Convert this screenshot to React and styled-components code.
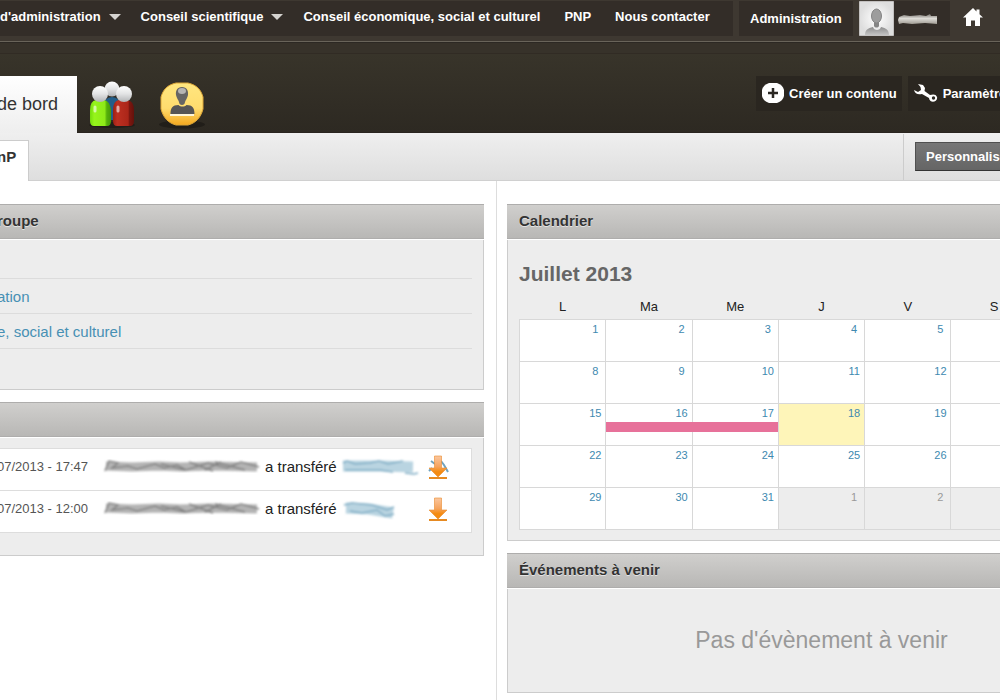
import React from "react";
import styled, { createGlobalStyle, css } from "styled-components";

const Global = createGlobalStyle`
  * { box-sizing: border-box; }
  body {
    margin: 0;
    background: #fff;
    font-family: "Liberation Sans", Arial, sans-serif;
    font-size: 15px;
    color: #222;
  }
  a { text-decoration: none; color: inherit; }
  ul { list-style: none; margin: 0; padding: 0; }
  button { font: inherit; border: 0; cursor: pointer; }
`;

const Viewport = styled.div`
  min-height: 100vh;
  overflow: hidden;
  display: flex;
`;

/* The portal is wider than the window on both sides. */
const Page = styled.div`
  flex: 1;
  margin: 0 -148px 0 -3px;
  display: flex;
  flex-direction: column;
`;

const TopBar = styled.header`
  display: flex;
  gap: 6px;
  height: 42px;
  padding-top: 1px;
  background: #3e3831;
  border-bottom: 1px solid #69645a;
`;

const Nav = styled.nav`
  display: flex;
  gap: 24px;
  width: 736px;
  height: 35px;
  padding: 0 0 3px 3px;
  align-items: center;
  background: #332d28;
`;

const NavLink = styled.a`
  display: flex;
  align-items: center;
  gap: 8px;
  color: #fff;
  font-weight: bold;
  font-size: 13px;
  line-height: 16px;
  white-space: nowrap;
`;

const Caret = styled.i`
  margin-right: -4px;
  border: 6px solid transparent;
  border-top-color: #d5d3d0;
  border-bottom: 0;
`;

const TopBox = styled.a`
  display: flex;
  align-items: center;
  height: 35px;
  padding: 0 11px;
  background: #332d28;
  color: #fff;
  font-weight: bold;
  font-size: 13px;
`;

const UserBox = styled(TopBox)`
  padding: 0 11px 0 0;
  gap: 4px;
`;

const HomeLink = styled.a`
  display: flex;
  align-items: center;
  height: 32px;
  padding-left: 7px;
`;

const Banner = styled.div`
  display: flex;
  align-items: flex-end;
  height: 91px;
  border-top: 1px solid #2c2823;
  border-bottom: 1px solid #29241f;
  background: linear-gradient(#37322a 0 10px, #312b24 10px 11px, #38342a 11px, #2d2922);
`;

const Tab = styled.a`
  width: 80px;
  height: 57px;
  margin-bottom: -1px;
  line-height: 57px;
  font-size: 18px;
  color: #333;
  background: linear-gradient(#fff, #eee);
`;

const IconLink = styled.a`
  display: flex;
  width: 70px;
  height: 56px;
  justify-content: center;
`;

const Actions = styled.div`
  display: flex;
  gap: 6px;
  width: 392px;
  height: 56px;
  margin-left: auto;
`;

const ActionButton = styled.button`
  display: flex;
  align-items: center;
  gap: 5px;
  height: 35px;
  padding: 0 5px 1px 6px;
  background: #2a2620;
  color: #fff;
  font-size: 13px;
  font-weight: bold;
  white-space: nowrap;
`;

const SubBar = styled.div`
  display: flex;
  justify-content: space-between;
  align-items: flex-end;
  height: 48px;
  background: linear-gradient(#efefef, #dedede);
  border-bottom: 1px solid #d0d0d0;
`;

const SubTab = styled.a`
  width: 32px;
  height: 41px;
  margin-bottom: -1px;
  border: solid #ccc;
  border-width: 1px 1px 0 0;
  background: #fff;
  font-weight: bold;
  line-height: 32px;
  color: #333;
`;

const Customize = styled.div`
  width: 245px;
  height: 46px;
  padding: 8px 11px;
  border-left: 1px solid #ccc;
`;

const GreyButton = styled.button`
  height: 29px;
  padding: 0 10px;
  border: 1px solid #505050;
  border-bottom-color: #333;
  background: linear-gradient(#777, #656565);
  color: #fff;
  font-size: 13px;
  font-weight: bold;
`;

const Columns = styled.main`
  flex: 1;
  display: grid;
  grid-template-columns: 500fr 651fr;
`;

const Column = styled.div`
  display: flex;
  flex-direction: column;
  gap: 12px;
  padding: 23px 12px 8px 0;
  ${(p) =>
    p.$right
      ? css`padding-left: 10px;`
      : css`border-right: 1px solid #ddd;`}
`;

const Panel = styled.section`
  background: #ededed;
  border: solid #ccc;
  border-width: 0 1px 1px;
`;

const PanelTitle = styled.h2`
  height: 35px;
  margin: 0 -1px;
  padding-left: ${(p) => (p.$inset ? "12px" : "0")};
  border: 1px solid #aeadac;
  border-width: 1px 0;
  background: linear-gradient(#d0cfcd, #b8b7b5);
  box-shadow: 0 1px #fff;
  font-size: 15px;
  line-height: 32px;
  color: #333;
  text-shadow: 0 1px #e4e4e4;
`;

const LinkList = styled.ul`
  margin-left: -1px;
  padding: 4px 11px 40px 0;
`;

const LinkItem = styled.li`
  height: 35px;
  line-height: 35px;
  border-bottom: 1px solid #dcdcdc;
  color: #4790b4;
  &:first-child { height: 36px; }
`;

const Transfers = styled.ul`
  margin: 11px 11px 22px -1px;
  border: 1px solid #ddd;
  border-left: 0;
  background: #fff;
`;

const Transfer = styled.li`
  display: flex;
  gap: 4px;
  height: 41px;
  padding-top: 5px;
  line-height: 26px;
  & + & { height: 42px; border-top: 1px solid #ddd; }
`;

const When = styled.time`
  width: 100px;
  font-size: 13px;
  line-height: 25px;
  color: #555;
  white-space: nowrap;
`;

const Download = styled.a`
  display: flex;
`;

const Month = styled.h3`
  margin: 0;
  padding: 22px 11px 0;
  font-size: 21px;
  line-height: 26px;
  color: #666;
`;

const CalendarWrap = styled.div`
  padding: 6px 11px 10px;
`;

const Calendar = styled.table`
  width: 100%;
  table-layout: fixed;
  border-collapse: collapse;
  th {
    height: 26px;
    padding: 1px 0 0;
    font-size: 13px;
    font-weight: normal;
  }
`;

const Day = styled.td`
  position: relative;
  height: 42px;
  padding: 3px 0 0;
  vertical-align: top;
  border: 1px solid #d8d8d8;
  background: ${(p) => (p.$today ? "#fef5b9" : p.$out ? "#ededed" : "#fff")};
`;

const DayLink = styled.a`
  display: block;
  width: 20px;
  margin-left: auto;
  text-align: center;
  font-size: 11px;
  line-height: 13px;
  color: ${(p) => (p.$out ? "#999" : "#4089b0")};
`;

const EventBar = styled.div`
  position: absolute;
  z-index: 1;
  top: 18px;
  left: 0;
  width: calc(200% + 1px);
  height: 10px;
  background: #e7719a;
`;

const Empty = styled.p`
  margin: 0;
  padding: 37px 0;
  text-align: center;
  font-size: 23px;
  line-height: 30px;
  color: #999;
`;

const weekdays = ["L", "Ma", "Me", "J", "V", "S", "D"];
const weeks = [0, 1, 2, 3, 4].map((w) =>
  weekdays.map((_, d) => {
    const n = w * 7 + d + 1;
    return { n: n > 31 ? n - 31 : n, out: n > 31, today: n === 18, event: n === 16 };
  })
);

const Portrait = () => (
  <svg width="35" height="35" viewBox="0 0 35 35">
    <defs>
      <radialGradient id="pbg"><stop offset="0" stopColor="#fff" /><stop offset="1" stopColor="#dedede" /></radialGradient>
      <linearGradient id="pfg" x2="0" y2="1"><stop stopColor="#8d8d8d" /><stop offset="1" stopColor="#c4c4c4" /></linearGradient>
    </defs>
    <path fill="url(#pbg)" stroke="#c3c1c0" d="M.5.5h34v34H.5z" />
    <path fill="url(#pfg)" d="M6 34c0-5 3-7 8-8 1 4 7 4 8 0 5 1 8 3 8 8z" />
    <path fill="#858585" d="M15 20h5v5c-1 2-4 2-5 0z" />
    <ellipse cx="17.500" cy="15" rx="5" ry="7" fill="#9d9d9d" stroke="#858585" />
  </svg>
);

const HiddenName = () => (
  <svg width="41" height="14" viewBox="0 0 41 14">
    <defs>
      <linearGradient id="hn" x2="0" y2="1"><stop stopColor="#77736e" /><stop offset=".45" stopColor="#dddbd6" /><stop offset="1" stopColor="#a19d95" /></linearGradient>
      <filter id="hb"><feGaussianBlur stdDeviation=".6" /></filter>
    </defs>
    <path filter="url(#hb)" fill="url(#hn)" d="M1 5 6 3l6 1 10-1 6 1 4-2 1 2h6v8l-12-1-13 1-9-1-4 1-1-4z" />
  </svg>
);

const HomeIcon = () => (
  <svg width="20" height="18" viewBox="0 0 20 18" fill="#fff">
    <path d="M10 0 0 9.500h3V18h5v-5.500h4V18h5V9.500h3l-3.500-3.300V1.500h-3v1.900z" />
  </svg>
);

const GroupIcon = () => (
  <svg width="48" height="56" viewBox="0 0 48 56">
    <defs>
      <linearGradient id="gh" x2="0" y2="1"><stop stopColor="#fff" /><stop offset=".5" stopColor="#e2e3e4" /><stop offset="1" stopColor="#b2b4b6" /></linearGradient>
      <linearGradient id="gg"><stop stopColor="#74dc0d" /><stop offset=".2" stopColor="#96f51b" /><stop offset=".7" stopColor="#8eea18" /><stop offset=".8" stopColor="#55b00a" /><stop offset="1" stopColor="#479b08" /></linearGradient>
      <linearGradient id="gr"><stop stopColor="#9c2014" /><stop offset=".2" stopColor="#bd3021" /><stop offset=".72" stopColor="#ab2619" /><stop offset=".78" stopColor="#7d1710" /><stop offset="1" stopColor="#64110b" /></linearGradient>
    </defs>
    <ellipse cx="24" cy="49" rx="23" ry="3" fill="#211e1a" />
    <path fill="#235e89" d="M17 24q7-6 14 0v20H17z" />
    <circle cx="24" cy="13" r="7.500" fill="url(#gh)" />
    <path fill="url(#gg)" d="M2 34q0-9 6-10h8q6 1 7 10v11q0 5-4 5H6q-4 0-4-5z" />
    <path fill="url(#gr)" d="M25 34q0-9 6-10h8q7 1 7 10v11q0 5-4 5H29q-4 0-4-5z" />
    <circle cx="12" cy="18" r="8" fill="url(#gh)" />
    <circle cx="36" cy="18" r="8" fill="url(#gh)" />
    <path stroke="#fff" strokeOpacity=".6" strokeWidth="3" strokeLinecap="round" d="M7 31v4m23-4v4" />
  </svg>
);

const MemberIcon = () => (
  <svg width="48" height="56" viewBox="0 0 48 56">
    <defs><linearGradient id="mb" x2="0" y2="1"><stop stopColor="#ffe780" /><stop offset=".6" stopColor="#ffdc6e" /><stop offset="1" stopColor="#f4a81f" /></linearGradient></defs>
    <ellipse cx="24" cy="48.500" rx="23" ry="4" fill="#211e19" />
    <path fill="url(#mb)" stroke="#dda738" d="M18 7h12C39 9 43 14 45 21v12C43 41 38 47 30 49H18C10 47 5 41 3 33V21C5 14 9 9 18 7z" />
    <path stroke="#fff6d8" strokeWidth="2" d="M12 39h24" />
    <path fill="#575655" d="M12.500 38c0-6 2-9 8-9 2 2 6 2 8 0 6 0 8 3 8 9z" />
    <path fill="#666564" d="M24 11c-5 0-6.500 4-6 8 .5 3 2.500 5 3 7 0 4 6 4 6 0 .5-2 2.500-4 3-7 .5-4-1-8-6-8z" />
    <ellipse cx="24" cy="15" rx="4" ry="3" fill="#b6b5b3" />
  </svg>
);

const PlusIcon = () => (
  <svg width="22" height="20" viewBox="0 0 22 20">
    <path fill="#fff" d="M7 0h8q6 2 7 7v6q-1 5-7 7H7q-6-2-7-7V7q1-5 7-7z" />
    <path stroke="#292722" strokeWidth="2.500" d="M11 5v10M6 10h10" />
  </svg>
);

const WrenchIcon = () => (
  <svg width="24" height="18" viewBox="0 0 24 18">
    <path fill="#fff" d="m4 0 5 1 2 3-.5 3L16 11c3-1 6-1 7 2 1 4-4 6-6.500 4-1-1-1.500-2-1.500-3L8 10c-4 1-7 0-8-4l4 2 3-2-.5-3z" />
    <circle cx="19.500" cy="14" r="1.700" fill="#292722" />
  </svg>
);

const NameSmudge = () => (
  <svg width="160" height="26" viewBox="0 0 160 26">
    <filter id="ns" x="-5%" y="-20%" width="110%" height="140%"><feGaussianBlur stdDeviation="1.300" /></filter>
    <g filter="url(#ns)" fill="none">
      <path stroke="#b4b4b4" strokeWidth="9" d="m5 12 26 1 27-1 22 1 30-1 46 1" />
      <path stroke="#808080" strokeWidth="1.500" d="m4 17 4-10 9 2-6 5 16-2 9 3 18-5 9 4 13-3 9 5 22-7 19 5 14-6 18 5M60 10l24 6M88 8l24 9m2-9 30 8m-24-8-16 8" />
    </g>
  </svg>
);

const FileSmudge = ({ short }) => (
  <svg width="82" height="26" viewBox="0 0 82 26">
    <filter id="fs" x="-10%" y="-30%" width="120%" height="160%"><feGaussianBlur stdDeviation="1.200" /></filter>
    <g filter="url(#fs)" fill="none">
      <path stroke="#b9d4e1" strokeWidth="11" d={short ? "m5 12 23 1 24 4" : "M2 12h39l31 1"} />
      <path stroke="#7fadc5" strokeWidth="1.500" d={short ? "m3 9 8-2 20 2 15 5 7-3M9 15l12 2 15-3 8 6 9-2" : "m2 9 4-2 8 3 15-1 9-2 9 3 15-3m2 12 9 1 4-1M4 16h35l13 2"} />
    </g>
  </svg>
);

const DownloadIcon = ({ smudged }) => (
  <svg width="24" height="30" viewBox="0 0 24 30">
    <defs><linearGradient id="da" x2="0" y2="1"><stop stopColor="#fbc79f" /><stop offset=".5" stopColor="#f6a45e" /><stop offset=".75" stopColor="#f48b12" /></linearGradient></defs>
    {smudged && <path stroke="#6fa3bf" strokeWidth="2" d="m4 7 4 3m-6 7 3-3m9-7 3 4 4 7" fill="none" />}
    <path fill="url(#da)" stroke="#e98a2c" strokeWidth=".6" d="M7.500 2h7v12H20l-9 9-9-9h5.500z" />
    <path stroke="#e68a22" strokeWidth="2" d="M2 24h18" />
  </svg>
);

export default function App() {
  return (
    <Viewport>
      <Global />
      <Page>
        <TopBar>
          <Nav>
            <NavLink href="#ca">d'administration <Caret /></NavLink>
            <NavLink href="#cs">Conseil scientifique <Caret /></NavLink>
            <NavLink href="#cesc">Conseil économique, social et culturel</NavLink>
            <NavLink href="#pnp">PNP</NavLink>
            <NavLink href="#contact">Nous contacter</NavLink>
          </Nav>
          <TopBox href="#admin">Administration</TopBox>
          <UserBox href="#profil"><Portrait /><HiddenName /></UserBox>
          <HomeLink href="#accueil"><HomeIcon /></HomeLink>
        </TopBar>
        <Banner>
          <Tab href="#bord">de bord</Tab>
          <IconLink href="#groupes"><GroupIcon /></IconLink>
          <IconLink href="#membres"><MemberIcon /></IconLink>
          <Actions>
            <ActionButton><PlusIcon />Créer un contenu</ActionButton>
            <ActionButton><WrenchIcon />Paramètres</ActionButton>
          </Actions>
        </Banner>
        <SubBar>
          <SubTab href="#np">nP</SubTab>
          <Customize><GreyButton>Personnaliser</GreyButton></Customize>
        </SubBar>
        <Columns>
          <Column>
            <Panel>
              <PanelTitle>roupe</PanelTitle>
              <LinkList>
                <LinkItem />
                <LinkItem><a href="#ation">ation</a></LinkItem>
                <LinkItem><a href="#culturel">e, social et culturel</a></LinkItem>
              </LinkList>
            </Panel>
            <Panel>
              <PanelTitle />
              <Transfers>
                {["17:47", "12:00"].map((t, i) => (
                  <Transfer key={t}>
                    <When>07/2013 - {t}</When>
                    <NameSmudge />
                    <span>a transféré</span>
                    <FileSmudge short={i === 1} />
                    <Download href="#fichier"><DownloadIcon smudged={i === 0} /></Download>
                  </Transfer>
                ))}
              </Transfers>
            </Panel>
          </Column>
          <Column $right>
            <Panel>
              <PanelTitle $inset>Calendrier</PanelTitle>
              <Month>Juillet 2013</Month>
              <CalendarWrap>
                <Calendar>
                  <thead>
                    <tr>{weekdays.map((d) => <th key={d} scope="col">{d}</th>)}</tr>
                  </thead>
                  <tbody>
                    {weeks.map((week, w) => (
                      <tr key={w}>
                        {week.map((d) => (
                          <Day key={d.n} $today={d.today} $out={d.out}>
                            <DayLink href="#jour" $out={d.out}>{d.n}</DayLink>
                            {d.event && <EventBar />}
                          </Day>
                        ))}
                      </tr>
                    ))}
                  </tbody>
                </Calendar>
              </CalendarWrap>
            </Panel>
            <Panel>
              <PanelTitle $inset>Événements à venir</PanelTitle>
              <Empty>Pas d'évènement à venir</Empty>
            </Panel>
          </Column>
        </Columns>
      </Page>
    </Viewport>
  );
}
